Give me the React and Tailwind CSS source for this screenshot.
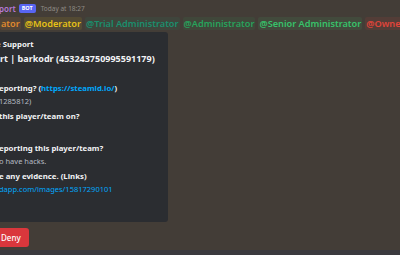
import React from "react";

const roles = [
  { name: "ator", cls: "text-[#e08a2e] bg-[#e08a2e]/10" },
  { name: "@Moderator", cls: "text-[#e6c117] bg-[#e6c117]/10" },
  { name: "@Trial Administrator", cls: "text-[#1a8f6e] bg-[#1a8f6e]/10" },
  { name: "@Administrator", cls: "text-[#27a35c] bg-[#27a35c]/10" },
  { name: "@Senior Administrator", cls: "text-[#37c26a] bg-[#37c26a]/10" },
  { name: "@Owner", cls: "text-[#e0443a] bg-[#e0443a]/10" },
];

const Field = ({ name, link, value, valueLink, extra }) => (
  <div className={"flex flex-col " + (extra || "")}>
    <div className="text-[7.8px] font-bold text-[#f2f3f5] leading-[13px] whitespace-nowrap">
      {name}
      {link && <span className="text-[#00a8fc]">{link}</span>}
      {link && ")"}
    </div>
    <div
      className={
        "text-[7.5px] leading-[12px] whitespace-nowrap " +
        (valueLink ? "text-[#00a8fc]" : "text-[#b5bac1]")
      }
    >
      {value}
    </div>
  </div>
);

export default function App() {
  return (
    <div
      className="w-[400px] h-[255px] overflow-hidden bg-[#433d37] flex flex-col"
      style={{ fontFamily: '"Noto Sans", "Open Sans", sans-serif' }}
    >
      <div className="flex items-center h-[16px] pt-[1px] whitespace-nowrap">
        <span className="text-[8px] font-semibold text-[#b67ad9] -ml-[1px]">port</span>
        <span className="ml-[3px] bg-[#5865f2] text-white text-[5.5px] font-bold px-[3px] h-[9px] leading-[9px] rounded-[2px]">
          BOT
        </span>
        <span className="ml-[5px] text-[6.5px] text-[#8f8b85]">Today at 18:27</span>
      </div>

      <div className="flex items-center h-[14px] gap-[3px] whitespace-nowrap text-[9.2px] font-semibold">
        {roles.map((r) => (
          <span key={r.name} className={"px-[1px] rounded-[2px] leading-[13px] " + r.cls}>
            {r.name}
          </span>
        ))}
      </div>

      <div className="mt-[2px] w-[168px] h-[190px] bg-[#2b2d31] rounded-r-[3px] flex flex-col pt-[6px] pr-[6px]">
        <div className="text-[7.8px] font-bold text-[#f2f3f5] leading-[12px] -ml-[4px] whitespace-nowrap">
          e Support
        </div>
        <div className="mt-[1px] text-[9px] font-bold text-[#f2f3f5] leading-[16px] whitespace-nowrap">
          rt | barkodr (453243750995591179)
        </div>
        <div className="mt-[15px] flex flex-col gap-[3px] -ml-[1px]">
          <Field name="eporting? (" link="https://steamid.io/" value="1285812)" />
          <Field name=" this player/team on?" value={"\u00a0"} extra="mb-[4px]" />
          <Field name="eporting this player/team?" value="o have hacks." />
          <Field name="e any evidence. (Links)" value="dapp.com/images/15817290101" valueLink />
        </div>
      </div>

      <div className="mt-[6px] flex">
        <div className="h-[19px] w-[29px] bg-[#da373c] rounded-r-[3px] flex items-center text-[8px] font-medium text-white pl-[1px]">
          Deny
        </div>
      </div>

      <div className="mt-auto h-[5px] bg-[#3b3a3e]" />
    </div>
  );
}
